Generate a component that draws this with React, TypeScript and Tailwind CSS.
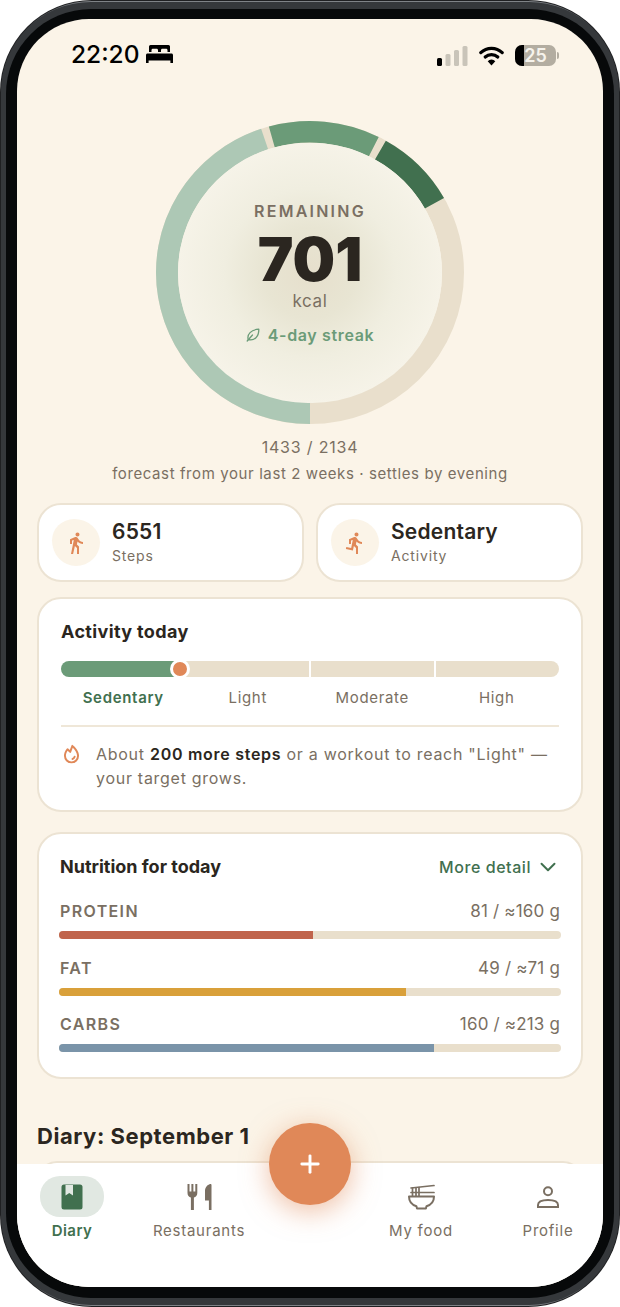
import { ChevronDown, Plus } from "lucide-react";
import { MdDirectionsRun, MdDirectionsWalk } from "react-icons/md";
import { PiFireBold } from "react-icons/pi";

const macros = [
  { name: "Protein", value: "81 / ≈160 g", fill: "w-[50.6%]", color: "bg-[#c0644c]" },
  { name: "Fat", value: "49 / ≈71 g", fill: "w-[69.2%]", color: "bg-[#d9a03a]" },
  { name: "Carbs", value: "160 / ≈213 g", fill: "w-[74.8%]", color: "bg-[#7a94a9]" },
];

function polar(angle: number, r: number) {
  const rad = (angle * Math.PI) / 180;
  return `${155 + r * Math.sin(rad)} ${155 - r * Math.cos(rad)}`;
}

function arc(from: number, to: number) {
  const large = to - from > 180 ? 1 : 0;
  return `M ${polar(from, 143)} A 143 143 0 ${large} 1 ${polar(to, 143)}`;
}

function Ring() {
  return (
    <svg width="310" height="305" viewBox="0 0 310 310" preserveAspectRatio="none" className="block">
      <circle cx="155" cy="155" r="143" fill="none" stroke="#e9dfcc" strokeWidth="22" />
      <path d={arc(180, 341.5)} fill="none" stroke="#adc8b5" strokeWidth="22" />
      <path d={arc(344.5, 386.5)} fill="none" stroke="#6b9b78" strokeWidth="22" />
      <path d={arc(389.5, 420.5)} fill="none" stroke="#41704f" strokeWidth="22" />
    </svg>
  );
}

function LeafIcon() {
  return (
    <svg width="14" height="14" viewBox="0 0 14 14" fill="none" stroke="#6b9b78" strokeWidth="1.300" strokeLinecap="round" strokeLinejoin="round">
      <path d="M2.200 11.500C.8 6.200 5 1.800 12.800 1.200 13 8.500 8.500 13.200 2.200 11.500z" />
      <path d="M1.200 13l5.300-6" />
    </svg>
  );
}

function BedIcon() {
  return (
    <svg width="27" height="18" viewBox="0 0 27 18" fill="#000">
      <path d="M3 1.500A1.500 1.500 0 0 1 4.500 0h18A1.500 1.500 0 0 1 24 1.500V7h-2.500V5.200c0-.8-.6-1.400-1.400-1.400h-3.700c-.8 0-1.400.6-1.400 1.400V7h-3V5.200c0-.8-.6-1.400-1.400-1.400H6.900c-.8 0-1.400.6-1.400 1.400V7H3z" />
      <path d="M1.500 8.500h24c.8 0 1.500.7 1.500 1.500v8h-2.600v-2.600H2.600V18H0v-8c0-.8.7-1.500 1.500-1.500z" />
    </svg>
  );
}

function SignalIcon() {
  return (
    <svg width="31" height="20" viewBox="0 0 31 20">
      <rect x="0" y="12" width="5" height="8" rx="1.500" fill="#000" />
      <rect x="8.500" y="8" width="5" height="12" rx="1.500" fill="#c9c4b9" />
      <rect x="17" y="4" width="5" height="16" rx="1.500" fill="#c9c4b9" />
      <rect x="25.500" y="0" width="5" height="20" rx="1.500" fill="#c9c4b9" />
    </svg>
  );
}

function WifiIcon() {
  return (
    <svg width="25" height="20" viewBox="0 0 25 20" fill="none" stroke="#000" strokeWidth="3.200" strokeLinecap="round">
      <path d="M1.800 6.600a15.600 15.600 0 0 1 21.400 0" />
      <path d="M6.200 11a9.400 9.400 0 0 1 12.600 0" />
      <path d="M12.500 19.500l-3.800-4.200a5 5 0 0 1 7.600 0z" fill="#000" stroke="none" />
    </svg>
  );
}

function Battery() {
  return (
    <div className="flex items-center gap-[1px]">
      <div className="relative flex h-[21px] w-[41px] items-center justify-center overflow-hidden rounded-[7px] bg-[#b3ada1]">
        <div className="absolute inset-y-0 left-0 w-[9px] bg-black" />
        <span className="relative text-[18px] font-semibold leading-none text-[#f6f3ec]">25</span>
      </div>
      <div className="h-[7px] w-[2px] rounded-r-full bg-[#b3ada1]" />
    </div>
  );
}

function BookIcon() {
  return (
    <svg width="22" height="26" viewBox="0 0 22 26">
      <rect x="0.500" y="0.500" width="21" height="25" rx="2.500" fill="#41704f" />
      <path d="M4.500 1h7.500v10.500l-3.750-2.600-3.750 2.600z" fill="#e1e8e2" />
    </svg>
  );
}

function CutleryIcon() {
  return (
    <svg width="25" height="26" viewBox="0 0 25 26" fill="#7a6f62">
      <path d="M0.500 0h2v7.500h1.900V0h2v7.500h1.900V0h2v9c0 2.400-1.500 4-3.400 4.500V26H3.900V13.500C2 13 0.500 11.400.5 9z" />
      <path d="M18 7c0-3.600 2.400-6.200 5-7 1 0 1.500.3 1.500 1V26h-2.600v-9.500H18z" />
    </svg>
  );
}

function BowlIcon() {
  return (
    <svg width="27" height="27" viewBox="0 0 27 27" fill="none" stroke="#7a6f62" strokeWidth="1.700" strokeLinecap="round" strokeLinejoin="round">
      <path d="M3 5l23-2.500M3 9.500h23" />
      <path d="M4.500 5v8M8 5v8M11 4.500V13" />
      <path d="M1 13.500h25c0 4.800-3.300 8.400-7.500 9.700l-.6 2.300H9l-.6-2.300C4.300 21.900 1 18.300 1 13.500z" strokeWidth="2" />
    </svg>
  );
}

function PersonIcon() {
  return (
    <svg width="22" height="22" viewBox="0 0 22 22" fill="none" stroke="#7a6f62" strokeWidth="2">
      <circle cx="11" cy="5.200" r="4" />
      <path d="M1 21v-2c0-3.300 4.500-5 10-5s10 1.700 10 5v2z" />
    </svg>
  );
}

function NavItem({ label, icon, active }: { label: string; icon: React.ReactNode; active?: boolean }) {
  return (
    <div className="flex w-[110px] flex-col items-center">
      <div className={`flex h-[41px] w-[64px] items-center justify-center rounded-[20px] ${active ? "bg-[#e1e8e2]" : ""}`}>
        {icon}
      </div>
      <span className={`mt-[3px] text-[15px] leading-[21px] ${active ? "font-semibold tracking-[0.03em] text-[#41704f]" : "tracking-[0.05em] text-[#7a6f62]"}`}>
        {label}
      </span>
    </div>
  );
}

function StatCard({ icon, value, label }: { icon: React.ReactNode; value: string; label: string }) {
  return (
    <div className="flex h-[79px] flex-1 items-center gap-[12px] rounded-[24px] border-2 border-[#ece3d3] bg-white pl-[13px]">
      <div className="flex h-[47px] w-[48px] items-center justify-center rounded-[46%_54%_50%_50%/46%_50%_50%_54%] bg-[#fbf4e8] text-[24px] text-[#e08858]">
        {icon}
      </div>
      <div>
        <div className="text-[21px] font-semibold leading-[26px] tracking-[0.01em] text-[#2b2620]">{value}</div>
        <div className="mt-[1px] text-[14px] leading-[20px] tracking-[0.06em] text-[#7a6f62]">{label}</div>
      </div>
    </div>
  );
}

export default function App() {
  return (
    <div className="h-[1307px] w-[620px] overflow-hidden bg-white font-['Inter',sans-serif]">
      <div className="h-full rounded-[92px] bg-[#1f2022] p-[1px]">
        <div className="h-full rounded-[91px] bg-[linear-gradient(#808488,#2f3134_2%,#2f3134_98%,#808488)] py-[1px]">
          <div className="h-full rounded-[90px] bg-[#35383b] px-[5px] py-[7px]">
            <div className="h-full rounded-[85px] bg-[#07090a] px-[11px] pb-[11px] pt-[10px]">
              <div className="relative flex h-full flex-col overflow-hidden rounded-[72px] bg-[#fbf4e8]">
                <div className="flex h-[50px] shrink-0 items-end justify-between pl-[54px] pr-[44px]">
                  <div className="flex items-center gap-[6px]">
                    <span className="text-[24.500px] font-medium leading-[30px] text-black">22:20</span>
                    <BedIcon />
                  </div>
                  <div className="flex items-center gap-[11px] pb-[3px]">
                    <SignalIcon />
                    <WifiIcon />
                    <Battery />
                  </div>
                </div>

                <main className="min-h-0 flex-1 overflow-hidden px-[20px]">
                  <div className="mt-[51px] flex justify-center">
                    <div className="relative h-[305px] w-[310px]">
                      <Ring />
                      <div className="absolute inset-x-[23px] inset-y-[22.500px] flex flex-col items-center rounded-full bg-[radial-gradient(closest-side,#e6dfcc_0%,#e8e5d3_35%,#f0eee0_65%,#f6f3e8_100%)]">
                        <div className="mt-[56.500px] text-[16px] font-semibold leading-[24px] tracking-[0.14em] text-[#7a6f62]">REMAINING</div>
                        <div className="mt-[6px] text-[60px] font-black leading-[60px] text-[#2b2620]">701</div>
                        <div className="text-[17px] leading-[24px] tracking-[0.04em] text-[#7a6f62]">kcal</div>
                        <div className="mt-[10px] flex items-center gap-[8px] text-[16px] font-semibold leading-[24px] tracking-[0.04em] text-[#6b9b78]">
                          <LeafIcon />
                          <span>4-day streak</span>
                        </div>
                      </div>
                    </div>
                  </div>
                  <div className="mt-[10px] text-center text-[16px] leading-[24px] tracking-[0.05em] text-[#7a6f62]">1433 / 2134</div>
                  <div className="mt-[4px] text-center text-[15px] leading-[22px] tracking-[0.04em] text-[#7a6f62]">
                    forecast from your last 2 weeks · settles by evening
                  </div>

                  <div className="mt-[18px] flex gap-[12px]">
                    <StatCard icon={<MdDirectionsWalk />} value="6551" label="Steps" />
                    <StatCard icon={<MdDirectionsRun />} value="Sedentary" label="Activity" />
                  </div>

                  <section className="mt-[15px] h-[215px] rounded-[24px] border-2 border-[#ece3d3] bg-white px-[22px] pt-[21px]">
                    <h2 className="text-[18px] font-bold leading-[24px] tracking-[0.02em] text-[#2b2620]">Activity today</h2>
                    <div className="relative mt-[17px]">
                      <div className="flex h-[16px] gap-[2px] overflow-hidden rounded-full">
                        <div className="flex-1 bg-[#6b9b78]" />
                        <div className="flex-1 bg-[#e9dfcc]" />
                        <div className="flex-1 bg-[#e9dfcc]" />
                        <div className="flex-1 bg-[#e9dfcc]" />
                      </div>
                      <div className="absolute left-[109px] top-[-2px] h-[20px] w-[20px] rounded-full border-[3px] border-white bg-[#e08858]" />
                    </div>
                    <div className="mt-[9px] flex">
                      <div className="flex-1 text-center text-[15px] font-semibold leading-[24px] tracking-[0.045em] text-[#41704f]">Sedentary</div>
                      <div className="flex-1 text-center text-[15px] leading-[24px] tracking-[0.045em] text-[#7a6f62]">Light</div>
                      <div className="flex-1 text-center text-[15px] leading-[24px] tracking-[0.045em] text-[#7a6f62]">Moderate</div>
                      <div className="flex-1 text-center text-[15px] leading-[24px] tracking-[0.045em] text-[#7a6f62]">High</div>
                    </div>
                    <div className="mt-[15px] h-[1.500px] bg-[#efe7d8]" />
                    <div className="mt-[15px] flex gap-[14px]">
                      <PiFireBold className="mt-[2px] shrink-0 text-[21px] text-[#e08858]" />
                      <p className="text-[16px] leading-[24px] tracking-[0.045em] text-[#7a6f62]">
                        About <b className="font-semibold text-[#2b2620]">200 more steps</b> or a workout to reach "Light" — your target grows.
                      </p>
                    </div>
                  </section>

                  <section className="mt-[20px] h-[247px] rounded-[24px] border-2 border-[#ece3d3] bg-white px-[20px] pt-[20px]">
                    <div className="flex items-center justify-between pl-[1px]">
                      <h2 className="text-[18px] font-bold leading-[24px] text-[#2b2620]">Nutrition for today</h2>
                      <div className="flex items-center gap-[4px] text-[16px] font-medium leading-[24px] tracking-[0.035em] text-[#41704f]">
                        More detail <ChevronDown size={26} strokeWidth={1.800} />
                      </div>
                    </div>
                    <div className="mt-[19px] flex flex-col gap-[16.500px]">
                      {macros.map((m) => (
                        <div key={m.name}>
                          <div className="flex items-center justify-between px-[1px] text-[16px] leading-[24px]">
                            <span className="font-semibold uppercase tracking-[0.085em] text-[#7a6f62]">{m.name}</span>
                            <span className="text-[17px] tracking-[0.01em] text-[#7a6f62]">{m.value}</span>
                          </div>
                          <div className="mt-[8px] h-[8px] overflow-hidden rounded-full bg-[#e9dfcc]">
                            <div className={`h-full ${m.fill} ${m.color}`} />
                          </div>
                        </div>
                      ))}
                    </div>
                  </section>

                  <h2 className="mt-[43px] text-[22px] font-bold leading-[28px] tracking-[0.025em] text-[#2b2620]">Diary: September 1</h2>
                  <div className="mt-[11px] h-[40px] rounded-[24px] border-2 border-[#ece3d3] bg-white" />
                </main>

                <nav className="relative flex h-[123px] shrink-0 justify-between bg-white pt-[12px]">
                  <div className="flex">
                    <NavItem label="Diary" active icon={<BookIcon />} />
                    <div className="ml-[17px]">
                      <NavItem label="Restaurants" icon={<CutleryIcon />} />
                    </div>
                  </div>
                  <div className="flex">
                    <NavItem label="My food" icon={<BowlIcon />} />
                    <div className="ml-[17px]">
                      <NavItem label="Profile" icon={<PersonIcon />} />
                    </div>
                  </div>
                  <button className="absolute left-[252px] top-[-41px] flex h-[82px] w-[82px] items-center justify-center rounded-full bg-[#e08858] text-white shadow-[0_6px_28px_rgba(224,136,88,0.55)]">
                    <Plus size={28} strokeWidth={2.500} />
                  </button>
                </nav>
              </div>
            </div>
          </div>
        </div>
      </div>
    </div>
  );
}
